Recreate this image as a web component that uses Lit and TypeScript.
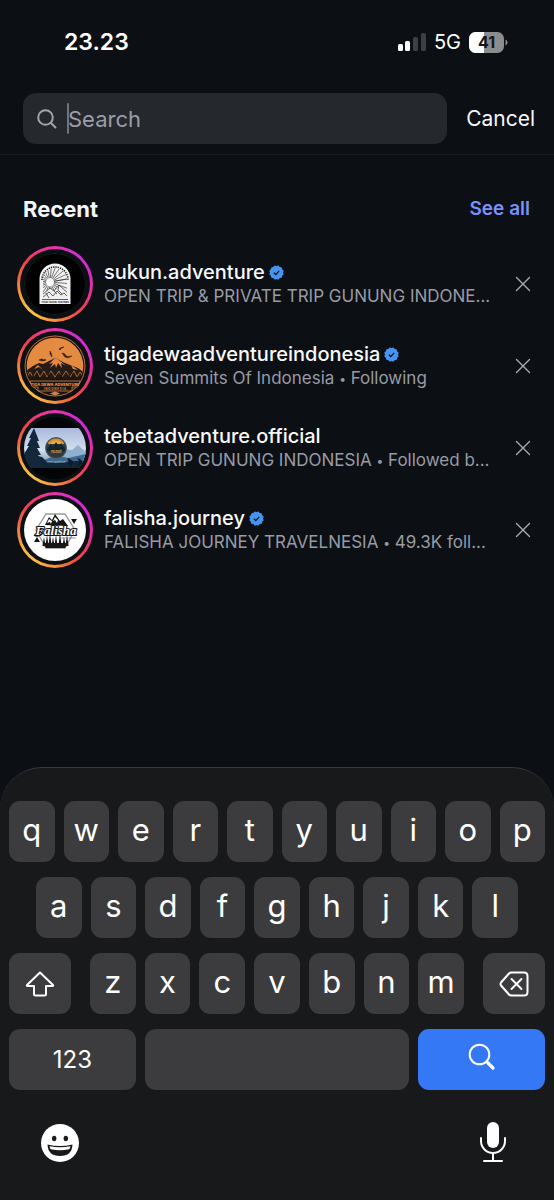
import { LitElement, html, svg, css, nothing } from "lit";
import { customElement, property } from "lit/decorators.js";

interface Account {
  name: string;
  detail: string;
  verified: boolean;
  avatar: string;
}

const ACCOUNTS: Account[] = [
  { name: "sukun.adventure", detail: "OPEN TRIP & PRIVATE TRIP GUNUNG INDONE...", verified: true, avatar: "sukun" },
  { name: "tigadewaadventureindonesia", detail: "Seven Summits Of Indonesia • Following", verified: true, avatar: "tiga" },
  { name: "tebetadventure.official", detail: "OPEN TRIP GUNUNG INDONESIA • Followed b...", verified: false, avatar: "tebet" },
  { name: "falisha.journey", detail: "FALISHA JOURNEY TRAVELNESIA • 49.3K foll...", verified: true, avatar: "falisha" },
];

/* All avatar artwork is drawn in a 62 x 62 box. */
const rays = Array.from({ length: 25 }, (_, i) => {
  const a = ((i * 15 - 10) * Math.PI) / 180;
  return svg`<line x1=${26 + 4 * Math.cos(a)} y1=${29 + 4 * Math.sin(a)} x2=${26 + 30 * Math.cos(a)} y2=${29 + 30 * Math.sin(a)}/>`;
});

const trees = (xs: number[], base: number, h: number, w: number) =>
  xs.map((x, i) => {
    const t = base - h - (i % 3) * 2;
    return svg`<path d=${`M${x} ${t}L${x + w} ${base}H${x - w}Z`}/>`;
  });

const ART: Record<string, unknown> = {
  sukun: svg`
    <rect width="62" height="62" fill="#000"/>
    <circle cx="31" cy="31" r="30.5" fill="none" stroke="#1b1d20"/>
    <path d="M15.500 51V26a15.500 15.500 0 0 1 31 0V51Z" fill="#f2f2f2"/>
    <path d="M18 27a13 13 0 0 1 26 0" fill="none" stroke="#222" stroke-width="1.6" stroke-dasharray="1.3 1"/>
    <clipPath id="arch"><path d="M19 45V27a12 12 0 0 1 24 0V45Z"/></clipPath>
    <g clip-path="url(#arch)">
      <rect x="16" y="12" width="30" height="36" fill="#f2f2f2"/>
      <g stroke="#222" stroke-width=".6">${rays}</g>
      <circle cx="26" cy="30" r="3.4" fill="#fff"/>
      <path d="M18 42l8-7 4 3 5-6 10 9v6H18Z" fill="#efefef" stroke="#222" stroke-width=".7"/>
      <path d="M18 45l7-6 4 4 4-5 4 4 3-2 5 5M30 38l3 3M35 32l-1 5 4 4M22 40l3 5" fill="none" stroke="#222" stroke-width=".7"/>
    </g>
    <path d="M18 46.500H44" stroke="#333" stroke-width=".8"/>
    <text x="31" y="49.800" font-size="2.300" font-weight="700" text-anchor="middle" fill="#111">YOUR TRAVEL PARTNER</text>`,
  tiga: svg`
    <rect width="62" height="62" fill="#1b1512"/>
    <circle cx="31" cy="31" r="30" fill="none" stroke="#b5733c" stroke-width="1"/>
    <clipPath id="disc"><circle cx="31" cy="31" r="28.300"/></clipPath>
    <g clip-path="url(#disc)">
      <rect width="62" height="38" fill="#e58a41"/>
      <path d="M0 37l9-6 6-3 4 1 6-3 6-3 4 2 6 3 5 2 8 3 8 6v8H0Z" fill="#261b16"/>
      <path d="M31 23l-6 6 4-1-3 5 5-4 1 4 2-5 4 5-1-5 5 3-6-5-3-2ZM14 30l-4 4 5-2 4 3M47 30l2 4 5 1" fill="#e58a41"/>
      <path d="M3 42l3-5 3 5 4-6 3 6 4-6 3 6 4-6 4 6 4-6 3 6 4-6 4 6 4-6 3 6 3-5 3 5" fill="none" stroke="#c97c3d" stroke-width=".8"/>
      <g fill="#1b1512">${trees([5, 9, 13, 17, 21, 25, 29, 33, 37, 41, 45, 49, 53, 57], 47, 6, 2.6)}</g>
    </g>
    <path d="M26 16l1.500 3 .5 3-2-3ZM35 14q2-2 5-2-3 1-4 3ZM38 18q3 0 4 3 3 1 6 0-4 3-7 1ZM15 25q3-2 5 0 1-1 2 0-3 2-7 0Z" fill="#2a1d16" stroke="#2a1d16" stroke-width=".5"/>
    <path d="M6 46H56l-2 6H48v4H14v-4H8Z" fill="#1b1512" stroke="#d58342" stroke-width=".8"/>
    <text x="31" y="51" font-size="4" font-weight="800" text-anchor="middle" fill="#e8924a">TIGA DEWA ADVENTURE</text>
    <text x="31" y="55" font-size="3" font-weight="700" text-anchor="middle" fill="#d58342">I N D O N E S I A</text>
    <path d="M26 58.500l5-2 5 2-5 2Z" fill="#d58342"/>`,
  tebet: svg`
    <linearGradient id="sky" x1="0" y1="0" x2="0" y2="1">
      <stop offset="0" stop-color="#a9b9dc"/><stop offset=".55" stop-color="#d5dfec"/><stop offset="1" stop-color="#5d83a5"/>
    </linearGradient>
    <rect width="62" height="62" fill="#030405"/>
    <rect y="11" width="62" height="40" fill="url(#sky)"/>
    <path d="M34 38l8-6 6 1 6-5 10 9v14H34Z" fill="#8fb0ce"/>
    <path d="M18 44l14-6 12 3 18-4v14H18Z" fill="#41698f"/>
    <path d="M0 51V36l18 4 4 4 9 2 10-1 11-1 11 0v7Z" fill="#12263a"/>
    <path d="M10 11l-5 10h2l-4 8h2l-5 8v14h20l-4-6h3l-5-7h3l-4-7h3l-3-7h2Z" fill="#14283b"/>
    <path d="M45 48l-1-5-1-2 3 1 3 2-1 6M54 50l1-6-2-3 3 1 3 3v5" fill="#0d1b29"/>
    <circle cx="32" cy="31" r="10.500" fill="#303942" stroke="#51606c"/>
    <path d="M24.500 27a8.500 8.500 0 0 1 15 0" fill="#efaa3b" stroke="#d6902c" stroke-width="2"/>
    <path d="M23 32l4-5 2 3 3-5 3 4 2-3 4 6v2H23Z" fill="#13242a"/>
    <text x="32" y="36" font-size="4" font-weight="700" font-style="italic" text-anchor="middle" fill="#d49b4a">Tebet</text>
    <text x="32" y="46" font-size="2.500" text-anchor="middle" fill="#aec2d2">Tebet Adventure</text>
    <rect y="51" width="62" height="11" fill="#030405"/>`,
  falisha: svg`
    <rect width="62" height="62" fill="#fff"/>
    <path d="M22 15H41L51 31 41 49H22L12 31Z" fill="#fff" stroke="#999" stroke-width="1.400"/>
    <path d="M21 26l4-8 3 3 3-6 5 7 3-2 5 7Z" fill="#161616"/>
    <path d="M25 20l-2 4 3-1 1 2 1-3M31 18l-2 4 2-1 2 3 1-3" fill="#fff"/>
    <g fill="#161616">${trees([20, 23, 26, 29, 32, 36, 40, 43], 47, 9, 1.6)}<path d="M19 44H44l-3 5H22Z"/></g>
    <path d="M47 20h6l-3 5ZM10 43h6l-3-5Z" fill="#161616"/>
    <text class="script" x="32" y="36" font-size="13" font-weight="700" font-style="italic" text-anchor="middle"
      fill="#fff" stroke="#161616" stroke-width="2.200" paint-order="stroke" stroke-linejoin="round">Falisha</text>
    <path d="M10 36q4 3 9-2" stroke="#161616" stroke-width="1.400" fill="none"/>
    <path d="M35 39H52" stroke="#666" stroke-width="1.200" stroke-dasharray="1 .4"/>`,
};

const badgePath = (() => {
  const n = 12;
  let d = "";
  for (let i = 0; i < n; i++) {
    const a = (i * 2 * Math.PI) / n;
    const b = ((i + 1) * 2 * Math.PI) / n;
    const p = (t: number, r: number) => `${(8 + r * Math.sin(t)).toFixed(2)} ${(8 - r * Math.cos(t)).toFixed(2)}`;
    d += `${i ? "" : `M${p(a, 6.8)}`}Q${p((a + b) / 2, 9)} ${p(b, 6.8)}`;
  }
  return d + "Z";
})();

@customElement("status-bar")
class StatusBar extends LitElement {
  static styles = css`
    :host {
      display: flex;
      align-items: center;
      justify-content: space-between;
      height: 84px;
      padding: 0 46px 0 64px;
      color: #fff;
    }
    .time { font-size: 23px; font-weight: 600; }
    .right { display: flex; align-items: center; gap: 8px; }
    .net { font-size: 20px; font-weight: 400; }
    svg { display: block; }
  `;
  render() {
    return html`
      <span class="time">23.23</span>
      <div class="right">
        <svg width="28" height="20" viewBox="0 0 28 20" aria-label="Signal">
          <rect y="12" width="5" height="7" rx="1.500" fill="#fff"/>
          <rect x="7" y="9" width="5" height="10" rx="1.500" fill="#fff"/>
          <rect x="15" y="5" width="5" height="14" rx="1.500" fill="#3c3f43"/>
          <rect x="23" y="1" width="5" height="18" rx="1.500" fill="#3c3f43"/>
        </svg>
        <span class="net">5G</span>
        <svg width="39" height="21" viewBox="0 0 39 21" aria-label="Battery">
          <clipPath id="cell"><rect width="35" height="21" rx="6.500"/></clipPath>
          <g clip-path="url(#cell)">
            <rect width="36" height="21" fill="#8b8c8e"/>
            <rect width="15" height="21" fill="#fff"/>
          </g>
          <path d="M36.500 7.500v6q2-1 2-3t-2-3Z" fill="#8b8c8e"/>
          <text x="17.500" y="16.300" font-size="16" font-weight="700" text-anchor="middle" fill="#14161a">41</text>
        </svg>
      </div>
    `;
  }
}

@customElement("account-row")
class AccountRow extends LitElement {
  @property({ attribute: false }) account!: Account;

  static styles = css`
    :host {
      display: grid;
      grid-template-columns: 76px minmax(0, 1fr) auto;
      align-items: center;
      gap: 11px;
      height: 82px;
      padding: 0 14px 0 17px;
    }
    .ring {
      display: grid;
      place-items: center;
      width: 76px;
      height: 76px;
      border-radius: 50%;
      background: conic-gradient(#e534ae, #d22ad6 40deg, #d92bc4 75deg, #e8348c 105deg, #ec3f5a 130deg, #f0573a 150deg, #f6903e 180deg, #fbc244 215deg, #f9b143 240deg, #f2703d 275deg, #ee3f4d 310deg, #ec3690 340deg, #e534ae);
    }
    .gap {
      display: grid;
      place-items: center;
      width: 70px;
      height: 70px;
      border-radius: 50%;
      background: #0c0f14;
    }
    .photo { width: 62px; height: 62px; border-radius: 50%; overflow: hidden; }
    .photo svg { display: block; }
    .script { font-family: "Liberation Serif", serif; }
    .name, .detail { line-height: 24px; white-space: nowrap; }
    .name {
      display: flex;
      align-items: center;
      gap: 4px;
      color: #f8f9fb;
      font-size: 20px;
      font-weight: 550;
    }
    .detail { overflow: hidden; color: #989ba5; font-size: 17px; }
    .dot { font-size: 12px; line-height: 12px; vertical-align: middle; }
    .remove {
      display: grid;
      place-items: center;
      width: 34px;
      height: 44px;
      padding: 0;
      border: 0;
      background: none;
      color: #a9acb4;
    }
  `;
  render() {
    const a = this.account;
    const [bio, note] = a.detail.split("•");
    return html`
      <div class="ring"><div class="gap"><div class="photo">
        <svg width="62" height="62" viewBox="0 0 62 62" aria-hidden="true">${ART[a.avatar]}</svg>
      </div></div></div>
      <div>
        <div class="name">
          <span>${a.name}</span>
          ${a.verified
            ? html`<svg width="15" height="15" viewBox="0 0 16 16" aria-label="Verified">
                <path d=${badgePath} fill="#4494f2"/>
                <path d="M5.200 8.300l2 1.900 3.700-4" fill="none" stroke="#0c0f14" stroke-width="1.300"/>
              </svg>`
            : nothing}
        </div>
        <div class="detail">${bio}${note ? html`<span class="dot">•</span>${note}` : nothing}</div>
      </div>
      <button class="remove" aria-label="Remove ${a.name}">
        <svg width="16" height="16" viewBox="0 0 16 16" fill="none" stroke="currentColor" stroke-width="1.400" stroke-linecap="round">
          <path d="M1.500 1.500l13 13M14.500 1.500l-13 13"/>
        </svg>
      </button>
    `;
  }
}

@customElement("soft-keyboard")
class SoftKeyboard extends LitElement {
  static styles = css`
    :host {
      display: block;
      padding: 33px 9px 0;
      border-top: 1px solid #3a3b3f;
      border-radius: 42px 42px 0 0;
      background: #18191b;
    }
    .keys { display: grid; gap: 15px; }
    .row { display: grid; grid-auto-flow: column; grid-auto-columns: minmax(0, 1fr); gap: 9px; }
    .second { padding: 0 27px; }
    .third { display: grid; grid-template-columns: 62px minmax(0, 1fr) 62px; gap: 19px; }
    .fourth { display: grid; grid-template-columns: 24fr 50fr 24fr; gap: 9px; }
    button { font-family: inherit; color: #fff; border: 0; padding: 0; background: none; }
    .key {
      display: grid;
      place-items: center;
      height: 61px;
      border-radius: 11px;
      background: #3c3c3e;
      font-size: 31px;
    }
    .letter { padding-bottom: 4px; }
    .num { font-size: 24px; }
    .go { padding-bottom: 6px; background: #3478f6; }
    .tools {
      display: flex;
      justify-content: space-between;
      height: 110px;
      padding: 32px 31px 0;
      box-sizing: border-box;
    }
    .tool { display: grid; place-items: center; height: 42px; }
    svg { display: block; }
  `;
  private letters(s: string) {
    return [...s].map((c) => html`<button class="key letter">${c}</button>`);
  }
  render() {
    return html`
      <div class="keys">
        <div class="row">${this.letters("qwertyuiop")}</div>
        <div class="row second">${this.letters("asdfghjkl")}</div>
        <div class="third">
          <button class="key" aria-label="Shift">
            <svg width="30" height="26" viewBox="0 0 30 26" fill="none" stroke="#fff" stroke-width="2" stroke-linejoin="round">
              <path d="M15 1.500L28 14q.6 1-.6 1H21v8q0 1.500-1.500 1.500h-9Q9 24.500 9 23v-8H2.600Q1.400 15 2 14Z"/>
            </svg>
          </button>
          <div class="row">${this.letters("zxcvbnm")}</div>
          <button class="key" aria-label="Delete">
            <svg width="30" height="26" viewBox="0 0 30 26" fill="none" stroke="#fff" stroke-width="2" stroke-linejoin="round" stroke-linecap="round">
              <path d="M12.500 1.500H25q3.500 0 3.500 3.500V21q0 3.500-3.500 3.500H12.500q-1.500 0-2.500-1L2 14.500Q1 13 2 11.500L10 2.500q1-1 2.500-1Z"/>
              <path d="M12.500 8l10 10M22.500 8l-10 10"/>
            </svg>
          </button>
        </div>
        <div class="fourth">
          <button class="key num">123</button>
          <button class="key" aria-label="Space"></button>
          <button class="key go" aria-label="Search">
            <svg width="28" height="28" viewBox="0 0 28 28" fill="none" stroke="#fff" stroke-linecap="round">
              <circle cx="11.500" cy="11.500" r="9.800" stroke-width="2"/>
              <path d="M18.500 18.500l1.500 1.500" stroke-width="2"/>
              <path d="M20 20l5 5" stroke-width="3.200"/>
            </svg>
          </button>
        </div>
      </div>
      <div class="tools">
        <button class="tool" aria-label="Emoji">
          <svg width="40" height="40" viewBox="0 0 40 40">
            <circle cx="20" cy="20" r="19" fill="#fff"/>
            <ellipse cx="14.200" cy="15.500" rx="2.200" ry="2.800" fill="#18191b"/>
            <ellipse cx="25.800" cy="15.500" rx="2.200" ry="2.800" fill="#18191b"/>
            <path d="M7.500 21.500q12.500 3 25 0Q32 33 20 33T7.500 21.500Z" fill="#18191b"/>
            <path d="M9.500 23.300q10.500 2 21 0-.4 1.800-1.300 3-9.200 1.800-18.400 0-1-1.200-1.300-3Z" fill="#fff"/>
          </svg>
        </button>
        <button class="tool" aria-label="Dictate">
          <svg width="42" height="42" viewBox="0 0 42 42" fill="none" stroke="#fff" stroke-width="2" stroke-linecap="round">
            <rect x="15" y="0" width="12" height="26" rx="6" fill="#fff" stroke="none"/>
            <path d="M9 16v3a12 12 0 0 0 24 0v-3M21 32v7M12 39h18"/>
          </svg>
        </button>
      </div>
    `;
  }
}

@customElement("app-root")
class AppRoot extends LitElement {
  static styles = css`
    :host {
      display: flex;
      flex-direction: column;
      min-height: 100vh;
      background: #0c0f14;
      color: #f5f6f8;
      font-family: Inter, "Liberation Sans", sans-serif;
    }
    .search {
      display: flex;
      align-items: center;
      gap: 19px;
      padding: 9px 19px 10px 23px;
      border-bottom: 1px solid #191c21;
    }
    .field {
      position: relative;
      display: flex;
      flex: 1;
      align-items: center;
      gap: 11px;
      min-width: 0;
      height: 51px;
      padding: 0 14px;
      border-radius: 13px;
      background: #25282d;
      box-sizing: border-box;
    }
    .field input {
      flex: 1;
      min-width: 0;
      padding: 0;
      border: 0;
      outline: 0;
      background: none;
      color: #f5f6f8;
      font: inherit;
      font-size: 22px;
    }
    .field input::placeholder { color: #9b9ea8; opacity: 1; }
    .caret {
      position: absolute;
      left: 44px;
      top: 10px;
      bottom: 10px;
      width: 2px;
      border-radius: 1px;
      background: #70737e;
    }
    .cancel, .all { padding: 0; border: 0; background: none; font: inherit; }
    .cancel { color: #f5f6f8; font-size: 21px; }
    .head {
      display: flex;
      align-items: center;
      justify-content: space-between;
      padding: 42px 24px 22px 23px;
      line-height: 24px;
    }
    h2 { margin: 0; font-size: 22px; font-weight: 700; }
    .all { color: #7b8ffb; font-size: 19px; font-weight: 600; text-decoration: none; }
    .list { margin: 0; padding: 0; list-style: none; }
    soft-keyboard { margin-top: auto; }
  `;
  render() {
    return html`
      <status-bar></status-bar>
      <form class="search">
        <label class="field">
          <svg width="20" height="20" viewBox="0 0 20 20" fill="none" stroke="#a3a6ae" stroke-width="2" stroke-linecap="round">
            <circle cx="8.500" cy="8.500" r="7.300"/><path d="M14 14l4.500 4.500"/>
          </svg>
          <input type="text" placeholder="Search" aria-label="Search">
          <span class="caret"></span>
        </label>
        <button type="button" class="cancel">Cancel</button>
      </form>
      <div class="head">
        <h2>Recent</h2>
        <a class="all" href="#">See all</a>
      </div>
      <ul class="list">
        ${ACCOUNTS.map((a) => html`<li><account-row .account=${a}></account-row></li>`)}
      </ul>
      <soft-keyboard></soft-keyboard>
    `;
  }
}
